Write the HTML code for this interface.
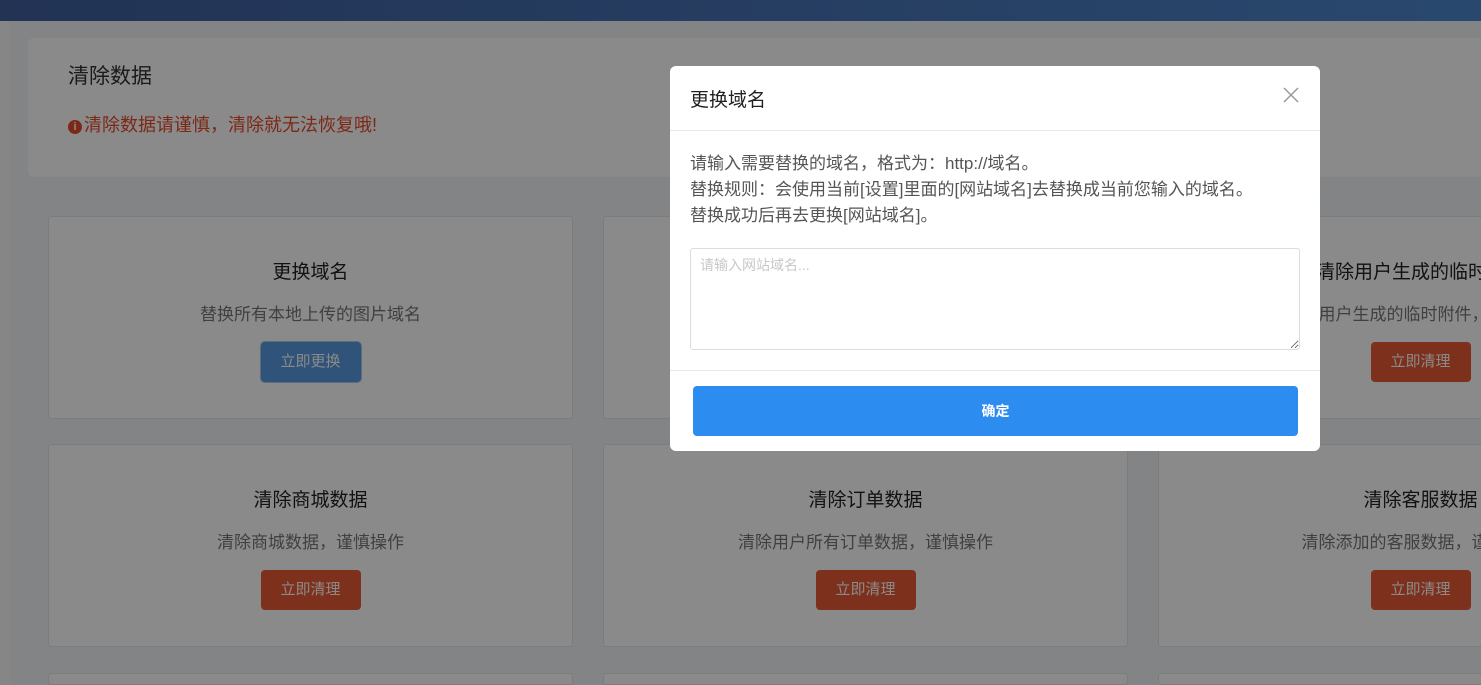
<!DOCTYPE html>
<html><head><meta charset="utf-8"><style>
*{box-sizing:border-box;margin:0;padding:0}
html,body{width:1481px;height:685px;overflow:hidden}
body{font-family:"Liberation Sans","Noto Sans CJK SC",sans-serif}
#w{position:relative;width:1481px;height:685px;overflow:hidden;background:#f3f4f6}
.top{position:absolute;left:0;top:0;width:1481px;height:21px;background:linear-gradient(90deg,#3f5e9c,#4d86cc)}
.side{position:absolute;left:0;top:21px;width:10px;height:664px;background:#f8f8f8}
.head{position:absolute;left:28px;top:38px;width:1500px;height:139px;background:#fff;border-radius:6px}
.head h1{position:absolute;left:40px;top:22px;font-size:21px;font-weight:normal;color:#333}
.head p{position:absolute;left:40px;top:73px;font-size:18px;color:#e84a2a}
.head p i{display:inline-block;width:14px;height:14px;border-radius:50%;background:#e84a2a;color:#fff;font-size:11px;font-style:normal;text-align:center;line-height:14px;vertical-align:1px;margin-right:2px;font-weight:bold}
.card{position:absolute;width:525px;height:203px;background:#fff;border:1px solid #e6e6e6;border-radius:3px;text-align:center;overflow:hidden}
.card h3{margin-top:40px;font-size:19px;font-weight:normal;color:#222}
.card p{margin-top:16px;font-size:17px;color:#777}
.card b{display:inline-block;margin-top:17px;width:100px;height:40px;line-height:40px;border-radius:4px;color:#fff;font-weight:normal;font-size:15px;background:#e85a35}
.card b.blue{background:#5a9be0;box-shadow:0 0 0 1px #a8c8ee}
.ov{position:absolute;left:0;top:0;width:1481px;height:685px;background:rgba(0,0,0,0.46)}
.modal{position:absolute;left:670px;top:66px;width:650px;height:385px;background:#fff;border-radius:6px}
.mh{height:65px;border-bottom:1px solid #e8e8e8;padding:19px 20px;font-size:19px;color:#222}
.x{position:absolute;right:20px;top:20px;width:18px;height:18px}
.mb{padding:20px 20px 0;font-size:17px;color:#555;line-height:26px}
textarea{display:block;margin-top:19px;width:610px;height:102px;border:1px solid #ddd;border-radius:3px;padding:6px 9px;font-size:14px;font-family:inherit;resize:vertical}
textarea::placeholder{color:#c8c8c8}
.mf{position:absolute;left:0;top:304px;width:650px;border-top:1px solid #e8e8e8}
.btn{position:absolute;left:23px;top:15px;width:605px;height:50px;background:#2d8cf0;border-radius:4px;color:#fff;text-align:center;line-height:50px;font-size:14px;font-weight:bold}
</style></head><body><div id="w">
<div class="top"></div><div class="side"></div>
<div class="head"><h1>清除数据</h1><p><i>i</i>清除数据请谨慎，清除就无法恢复哦!</p></div>
<div class="card" style="left:48px;top:216px"><h3>更换域名</h3><p>替换所有本地上传的图片域名</p><b class="blue">立即更换</b></div>
<div class="card" style="left:603px;top:216px"><h3>清除数据</h3><p>清除数据</p><b>立即清理</b></div>
<div class="card" style="left:1158px;top:216px"><h3>清除用户生成的临时附件</h3><p>清除用户生成的临时附件，不会影响</p><b>立即清理</b></div>
<div class="card" style="left:48px;top:444px"><h3>清除商城数据</h3><p>清除商城数据，谨慎操作</p><b>立即清理</b></div>
<div class="card" style="left:603px;top:444px"><h3>清除订单数据</h3><p>清除用户所有订单数据，谨慎操作</p><b>立即清理</b></div>
<div class="card" style="left:1158px;top:444px"><h3>清除客服数据</h3><p>清除添加的客服数据，谨慎操作</p><b>立即清理</b></div>
<div class="card" style="left:48px;top:673px;height:12px"></div>
<div class="card" style="left:603px;top:673px;height:12px"></div>
<div class="card" style="left:1158px;top:673px;height:12px"></div>
<div class="ov"></div>
<div class="modal">
<div class="mh">更换域名</div>
<svg class="x" viewBox="0 0 18 18"><path d="M2 2L16 16M16 2L2 16" stroke="#999" stroke-width="1.5"/></svg>
<div class="mb">请输入需要替换的域名，格式为：http://域名。<br>替换规则：会使用当前[设置]里面的[网站域名]去替换成当前您输入的域名。<br>替换成功后再去更换[网站域名]。
<textarea placeholder="请输入网站域名..."></textarea></div>
<div class="mf"><div class="btn">确定</div></div>
</div>
</div></body></html>
